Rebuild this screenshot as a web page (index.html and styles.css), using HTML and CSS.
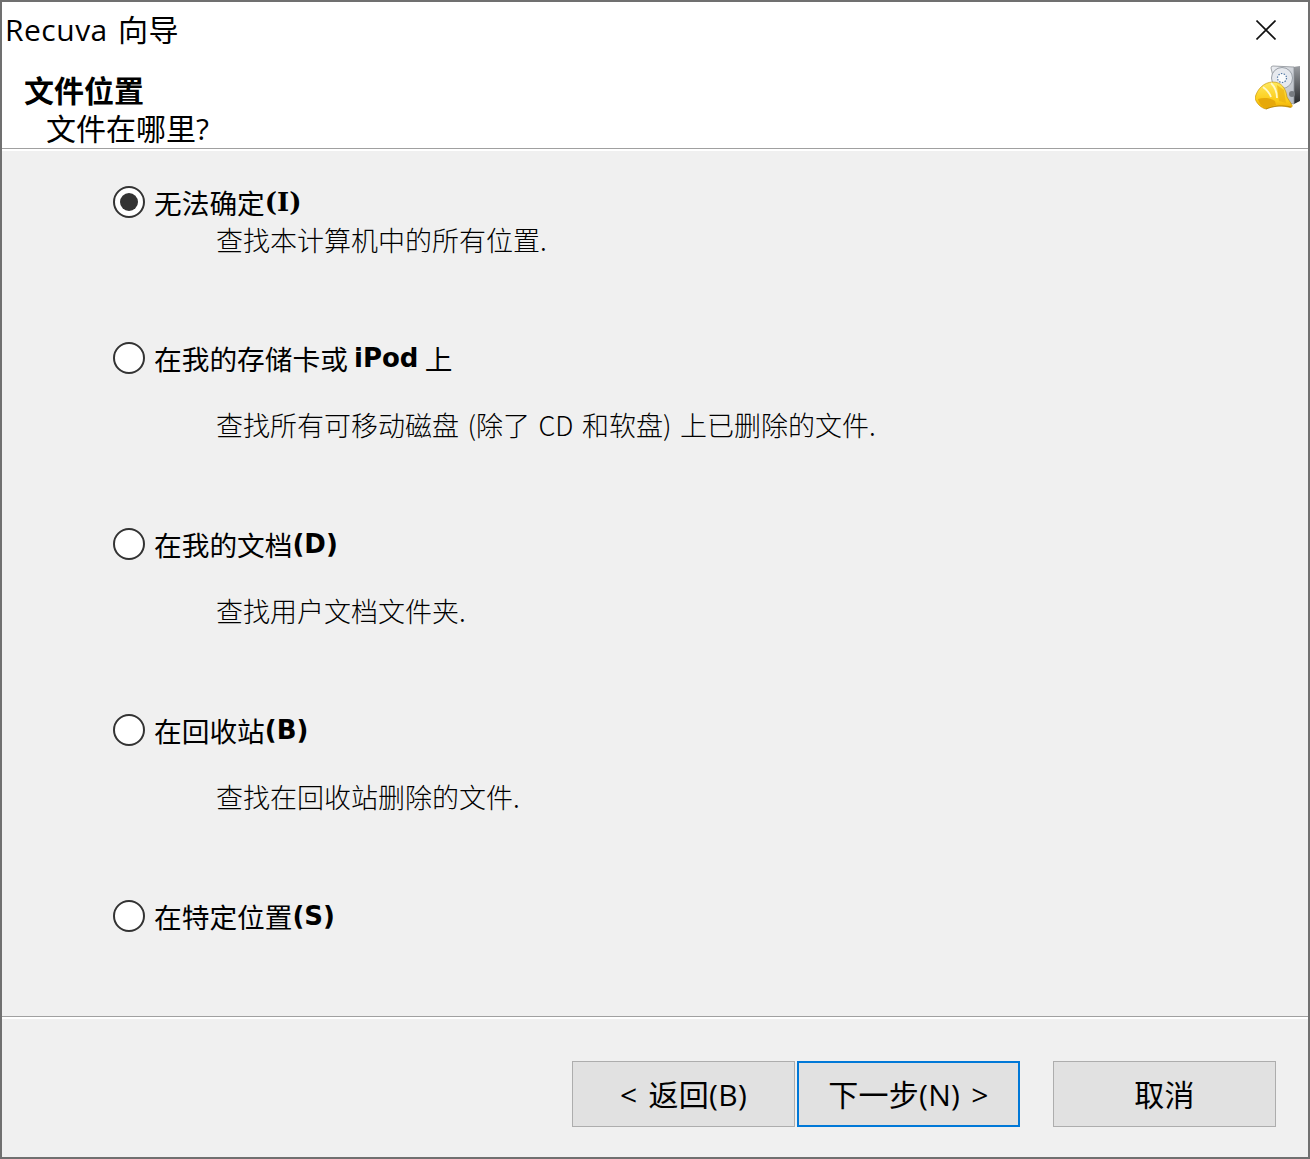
FILE: index.html
```html
<!DOCTYPE html>
<html>
  <head>
    <meta charset="UTF-8">
    <title>Recuva 向导</title>
    <link rel="stylesheet" href="styles.css">
  </head>
  <body>
    <div id="wizard">
      <div class="titlebar">
        <span class="window-title">Recuva 向导</span>
        <svg class="close" width="20" height="20" viewBox="0 0 20 20">
          <path d="M0.5 0.5 L19.5 19.5 M19.5 0.5 L0.5 19.5" stroke="#111" stroke-width="1.6" fill="none"/>
        </svg>
      </div>

      <div class="header">
        <div class="heading">
          <h1>文件位置</h1>
          <p>文件在哪里?</p>
        </div>
        <svg class="logo" width="46" height="46" viewBox="0 0 46 46">
          <defs>
            <linearGradient id="hat" x1="0" y1="0" x2="0" y2="1">
              <stop offset="0" stop-color="#ffe95e"/>
              <stop offset="0.7" stop-color="#fccb16"/>
              <stop offset="1" stop-color="#eeaa05"/>
            </linearGradient>
            <linearGradient id="disk" x1="0" y1="0" x2="1" y2="1">
              <stop offset="0" stop-color="#eef0f4"/>
              <stop offset="1" stop-color="#b4b9c1"/>
            </linearGradient>
            <linearGradient id="side" x1="0" y1="0" x2="0" y2="1">
              <stop offset="0" stop-color="#9a9da2"/>
              <stop offset="1" stop-color="#26282b"/>
            </linearGradient>
          </defs>
          <path d="M38 2 L45 1 L45 36 L39 39 Z" fill="url(#side)"/>
          <path d="M16 3 Q16 1 18 1 L39 2 L39 39 L24 36 Z" fill="url(#disk)" stroke="#8b9097" stroke-width="0.8"/>
          <circle cx="27" cy="13" r="10.5" fill="#e6e9ee" stroke="#9aa0a8"/>
          <circle cx="27" cy="13" r="4.5" fill="#fafbfc" stroke="#4f76a3" stroke-width="1.2" stroke-dasharray="1.4 1.4"/>
          <circle cx="37" cy="29" r="3" fill="#777b81"/>
          <path d="M0 33 C2 24 9 17 18 17 C26 17 31 23 32 32 L37 40 C38 42 36 43 33 42 C25 40 18 41 11 44 C6 43 1 38 0 33 Z" fill="url(#hat)" stroke="#c08c00" stroke-width="0.6"/>
          <path d="M3 34 C9 32 16 33 20 36 L21 40 C17 41 14 42 11 43 C7 42 4 38 3 34 Z" fill="#e6a80a"/>
          <path d="M22 20 L24 36 L31 38 L29 25 Z" fill="#e9b010" opacity="0.7"/>
          <path d="M8 22 C12 25 15 29 16 32 M16 18 C20 22 22 26 22 33" stroke="#fff9c8" stroke-width="1.8" fill="none"/>
          <path d="M11 44 C18 41 28 40 36 42" stroke="#a87800" stroke-width="0.8" fill="none" opacity="0.8"/>
        </svg>
      </div>

      <div class="options">
        <div class="option option-first">
          <label class="choice"><span class="radio checked"></span>无法确定<b class="slab">(I)</b></label>
          <div class="desc">查找本计算机中的所有位置.</div>
        </div>
        <div class="option">
          <label class="choice"><span class="radio"></span>在我的存储卡或 <b>iPod</b> 上</label>
          <div class="desc">查找所有可移动磁盘 (除了 CD 和软盘) 上已删除的文件.</div>
        </div>
        <div class="option">
          <label class="choice"><span class="radio"></span>在我的文档<b>(D)</b></label>
          <div class="desc">查找用户文档文件夹.</div>
        </div>
        <div class="option">
          <label class="choice"><span class="radio"></span>在回收站<b>(B)</b></label>
          <div class="desc">查找在回收站删除的文件.</div>
        </div>
        <div class="option option-last">
          <label class="choice"><span class="radio"></span>在特定位置<b>(S)</b></label>
        </div>
      </div>

      <div class="footer">
        <button>&lt; 返回(B)</button>
        <button class="default">下一步(N) &gt;</button>
        <button class="cancel">取消</button>
      </div>
    </div>
  </body>
</html>
```

FILE: styles.css
```css
html, body {
  margin: 0;
  height: 100%;
}

body {
  font-family: "Open Sans", "Noto Sans CJK SC", sans-serif;
  color: #000;
}

#wizard {
  box-sizing: border-box;
  width: 1310px;
  height: 1159px;
  border: 2px solid #707070;
  background: #f0f0f0;
  display: flex;
  flex-direction: column;
}

.titlebar {
  height: 58px;
  background: #fff;
  display: flex;
  align-items: center;
  justify-content: space-between;
  padding: 0 32px 0 3px;
  flex: none;
}

.window-title {
  font-size: 30px;
  line-height: 58px;
  letter-spacing: 0.5px;
  word-spacing: 2px;
  margin-top: -2px;
}

.close {
  margin-top: -2px;
}

.header {
  height: 88px;
  background: #fff;
  border-bottom: 1px solid #a0a0a0;
  box-shadow: 0 2px 0 #fff;
  display: flex;
  justify-content: space-between;
  padding: 0 7px 0 22px;
  flex: none;
}

.heading h1 {
  margin: 11px 0 0;
  font-size: 30px;
  font-weight: bold;
  line-height: 40px;
}

.heading p {
  margin: -1px 0 0 22px;
  font-size: 30px;
  line-height: 38px;
}

.logo {
  margin-top: 5px;
}

.options {
  flex: 1;
  min-height: 0;
  padding: 37px 0 0 111px;
  font-family: "Noto Sans CJK SC", sans-serif;
  font-size: 27px;
}

.option {
  height: 186px;
}

.option-first {
  height: 156px;
}

.option-last {
  height: auto;
}

.choice {
  display: flex;
  align-items: center;
  height: 32px;
  white-space: pre;
  font-size: 27.7px;
}

.choice b {
  font-family: "DejaVu Sans", sans-serif;
  font-size: 26px;
  font-weight: bold;
}

.choice b.slab {
  font-family: "DejaVu Serif", serif;
}

.radio {
  box-sizing: border-box;
  width: 32px;
  height: 32px;
  border: 2px solid #333;
  border-radius: 50%;
  background: #fff;
  margin-right: 9px;
  display: flex;
  align-items: center;
  justify-content: center;
}

.radio.checked::after {
  content: "";
  width: 18px;
  height: 18px;
  border-radius: 50%;
  background: #333;
}

.desc {
  margin: 35px 0 0 103px;
  line-height: 32px;
  font-weight: 300;
  word-spacing: 2.5px;
}

.option-first .desc {
  margin-top: 6px;
}

.footer {
  box-sizing: border-box;
  height: 141px;
  border-top: 1px solid #a0a0a0;
  box-shadow: inset 0 2px 0 #fff;
  display: flex;
  align-items: flex-start;
  padding: 44px 32px 0 570px;
  flex: none;
}

button {
  box-sizing: border-box;
  width: 223px;
  height: 66px;
  margin-right: 2px;
  border: 1px solid #adadad;
  background: #e1e1e1;
  font-family: "Open Sans", "Noto Sans CJK SC", sans-serif;
  font-size: 30px;
  letter-spacing: 0.3px;
  word-spacing: 3px;
  color: #000;
  padding: 0 0 2px;
}

button.default {
  border: 2px solid #0078d7;
  margin-right: 33px;
}

button.cancel {
  margin-right: 0;
}
```
